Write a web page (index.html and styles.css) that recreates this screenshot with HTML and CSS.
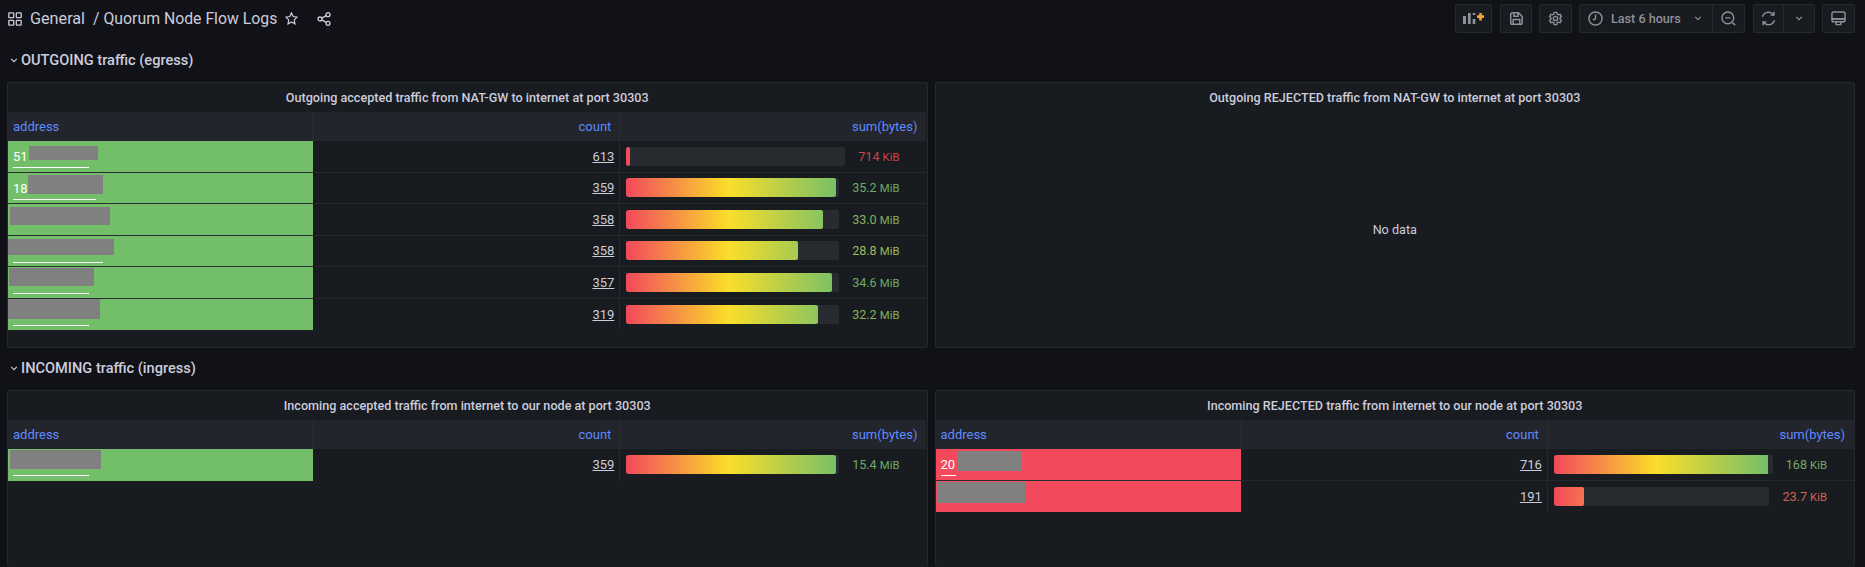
FILE: index.html
```html
<!DOCTYPE html>
<html lang="en">
<head>
  <meta charset="UTF-8">
  <meta name="viewport" content="width=device-width, initial-scale=1.0">
  <title>Quorum Node Flow Logs</title>
  <link rel="stylesheet" href="styles.css">
</head>
<body>
  <header class="navbar">
    <div class="crumbs">
      <svg class="icon grid-icon" viewBox="0 0 14 14"><rect x="0.800" y="0.800" width="4.900" height="4.900" rx="0.600"/><rect x="8.300" y="0.800" width="4.900" height="4.900" rx="0.600"/><rect x="0.800" y="8.300" width="4.900" height="4.900" rx="0.600"/><rect x="8.300" y="8.300" width="4.900" height="4.900" rx="0.600"/></svg>
      <span class="crumb-folder">General</span>
      <span class="crumb-name">/ Quorum Node Flow Logs</span>
      <svg class="icon star-icon" viewBox="0 0 14 14"><path d="M7 1l1.800 3.900 4.200.6-3 3 .7 4.300L7 10.700l-3.700 2.100.7-4.300-3-3 4.200-.6z"/></svg>
      <svg class="icon share-icon" viewBox="0 0 14 14"><circle cx="11" cy="2.700" r="2"/><circle cx="3" cy="7" r="2"/><circle cx="11" cy="11.300" r="2"/><path d="M4.800 6.100l4.400-2.500M4.800 7.900l4.400 2.500"/></svg>
    </div>
    <div class="toolbar">
      <button class="btn btn-add">
        <svg viewBox="0 0 21 11" class="add-icon"><path class="bars" d="M0 3h3v8H0zM5 0h2.700v11H5zM9.700 6h2.600v5H9.700zM9.700 0h2.600v2H9.700z"/><path class="plus" d="M16.200 0h2.600v2.300H21v2.600h-2.200V7.500h-2.600V4.900H14V2.300h2.200z"/></svg>
      </button>
      <button class="btn btn-save">
        <svg class="icon" viewBox="0 0 13 13"><path d="M2.200 .8h6.300l3.700 3.700v6.300a1.500 1.500 0 0 1-1.500 1.500H2.200a1.500 1.500 0 0 1-1.500-1.500V2.300A1.500 1.500 0 0 1 2.200 .8zM3.800 .8v3.400h4.200V.8M3.200 12.300V7.500h6.600v4.800"/></svg>
      </button>
      <button class="btn btn-cog">
        <svg class="icon" viewBox="0 0 16 16"><circle cx="8" cy="8" r="2.300"/><path d="M6.600 1.500h2.800l.4 1.900 1.300.7 1.800-.6 1.400 2.400-1.400 1.300v1.600l1.400 1.300-1.400 2.400-1.800-.6-1.300.7-.4 1.900H6.600l-.4-1.900-1.300-.7-1.800.6-1.400-2.400 1.400-1.300V7.200L1.700 5.900l1.400-2.400 1.800.6 1.300-.7z"/></svg>
      </button>
      <div class="btn-group group-time">
        <button class="btn btn-time">
          <svg class="icon" viewBox="0 0 16 16"><circle cx="8" cy="8" r="7"/><path d="M8 3.800v4.500l-2.800 1.300"/></svg>
          <span class="time-label">Last 6 hours</span>
          <svg class="chev" viewBox="0 0 10 6"><path d="M1.500 1L5 4.500 8.500 1"/></svg>
        </button>
        <button class="btn btn-zoom">
          <svg class="icon" viewBox="0 0 16 16"><circle cx="7.300" cy="7.300" r="6.300"/><path d="M4.500 7.300h5.600M12 12l3.200 3.200"/></svg>
        </button>
      </div>
      <div class="btn-group">
        <button class="btn btn-refresh">
          <svg class="icon" viewBox="0 0 16 16"><path d="M1.600 6.200A6.600 6.600 0 0 1 13.200 4M14.400 9.800A6.600 6.600 0 0 1 2.800 12M13.800 .8v3.600h-3.600M2.200 15.200v-3.600h3.600"/></svg>
        </button>
        <button class="btn btn-more">
          <svg class="chev" viewBox="0 0 10 6"><path d="M1.500 1L5 4.500 8.500 1"/></svg>
        </button>
      </div>
      <button class="btn btn-tv">
        <svg class="icon" viewBox="0 0 16 16"><rect x="1" y="1" width="14" height="10.500" rx="2"/><path class="tv-band" d="M1 8.500h14"/><path d="M5.500 11.500v3h5v-3"/></svg>
      </button>
    </div>
  </header>

  <h2 class="row-title">
    <svg class="chev" viewBox="0 0 10 6"><path d="M1.500 1L5 4.500 8.500 1"/></svg>
    OUTGOING traffic (egress)
  </h2>
  <section class="panels">
    <article class="panel">
      <h3 class="panel-title">Outgoing accepted traffic from NAT-GW to internet at port 30303</h3>
      <div class="table">
        <div class="cell-head">address</div>
        <div class="cell-head head-num">count</div>
        <div class="cell-head head-num">sum(bytes)</div>

        <div class="addr ok"><a class="addr-link link-76">51</a><span class="mask mask-a"></span></div>
        <div class="num"><a>613</a></div>
        <div class="gauge"><div class="track"><div class="fill" style="width:1.800%"></div></div><span class="val v-red">714 <small>KiB</small></span></div>

        <div class="addr ok"><a class="addr-link link-83">18</a><span class="mask mask-b"></span></div>
        <div class="num"><a>359</a></div>
        <div class="gauge"><div class="track"><div class="fill" style="width:98.600%"></div></div><span class="val v-green">35.2 <small>MiB</small></span></div>

        <div class="addr ok"><span class="mask mask-c"></span></div>
        <div class="num"><a>358</a></div>
        <div class="gauge"><div class="track"><div class="fill" style="width:92.500%"></div></div><span class="val v-green2">33.0 <small>MiB</small></span></div>

        <div class="addr ok"><a class="addr-link link-90"></a><span class="mask mask-d"></span></div>
        <div class="num"><a>358</a></div>
        <div class="gauge"><div class="track"><div class="fill" style="width:80.800%"></div></div><span class="val v-lime">28.8 <small>MiB</small></span></div>

        <div class="addr ok"><a class="addr-link link-76"></a><span class="mask mask-e"></span></div>
        <div class="num"><a>357</a></div>
        <div class="gauge"><div class="track"><div class="fill" style="width:96.700%"></div></div><span class="val v-green">34.6 <small>MiB</small></span></div>

        <div class="addr ok"><a class="addr-link link-76"></a><span class="mask mask-f"></span></div>
        <div class="num"><a>319</a></div>
        <div class="gauge"><div class="track"><div class="fill" style="width:90.200%"></div></div><span class="val v-green2">32.2 <small>MiB</small></span></div>
      </div>
    </article>
    <article class="panel">
      <h3 class="panel-title">Outgoing REJECTED traffic from NAT-GW to internet at port 30303</h3>
      <div class="no-data">No data</div>
    </article>
  </section>

  <h2 class="row-title">
    <svg class="chev" viewBox="0 0 10 6"><path d="M1.500 1L5 4.500 8.500 1"/></svg>
    INCOMING traffic (ingress)
  </h2>
  <section class="panels panels-cut">
    <article class="panel">
      <h3 class="panel-title">Incoming accepted traffic from internet to our node at port 30303</h3>
      <div class="table">
        <div class="cell-head">address</div>
        <div class="cell-head head-num">count</div>
        <div class="cell-head head-num">sum(bytes)</div>

        <div class="addr ok"><a class="addr-link link-76"></a><span class="mask mask-g"></span></div>
        <div class="num"><a>359</a></div>
        <div class="gauge"><div class="track"><div class="fill" style="width:98.600%"></div></div><span class="val v-green">15.4 <small>MiB</small></span></div>
      </div>
    </article>
    <article class="panel">
      <h3 class="panel-title">Incoming REJECTED traffic from internet to our node at port 30303</h3>
      <div class="table">
        <div class="cell-head">address</div>
        <div class="cell-head head-num">count</div>
        <div class="cell-head head-num">sum(bytes)</div>

        <div class="addr bad"><a class="addr-link link-15">20</a><span class="mask mask-h"></span></div>
        <div class="num"><a>716</a></div>
        <div class="gauge"><div class="track"><div class="fill" style="width:98.600%"></div></div><span class="val v-green">168 <small>KiB</small></span></div>

        <div class="addr bad"><span class="mask mask-i"></span></div>
        <div class="num"><a>191</a></div>
        <div class="gauge"><div class="track"><div class="fill" style="width:13.800%"></div></div><span class="val v-orange">23.7 <small>KiB</small></span></div>
      </div>
    </article>
  </section>
</body>
</html>
```

FILE: styles.css
```css
html, body {
  height: 100%;
  overflow: hidden;
}
body {
  margin: 0;
  padding: 0 10px 0 7px;
  background-color: #111217;
  color: #ccccdc;
  font-family: Roboto, "Open Sans", sans-serif;
  font-size: 12.6px;
}

/* top bar */
.navbar {
  display: flex;
  justify-content: space-between;
  align-items: flex-start;
  height: 40px;
}
.crumbs {
  display: flex;
  align-items: center;
  height: 37px;
  font-size: 15.800px;
}
.crumb-folder {
  margin-left: 8px;
  font-size: 16.200px;
}
.crumb-name {
  margin-left: 8px;
}
.icon {
  width: 15px;
  height: 15px;
  fill: none;
  stroke: currentColor;
  stroke-width: 1.300;
  flex: none;
}
.grid-icon {
  width: 14px;
  height: 14px;
  margin-left: 1px;
}
.star-icon {
  width: 13px;
  height: 13px;
  margin-left: 8px;
}
.share-icon {
  width: 14px;
  height: 14px;
  margin-left: 19px;
}
.toolbar {
  display: flex;
  gap: 7px;
  margin-top: 4px;
  color: #8f919a;
}
.toolbar .icon {
  stroke-width: 1.500;
}
.btn-group {
  display: flex;
}
.group-time {
  margin-right: 1px;
}
.btn {
  display: flex;
  align-items: center;
  justify-content: center;
  height: 29px;
  padding: 0;
  background-color: #181b1f;
  border: 1px solid #25282d;
  border-radius: 2px;
  color: inherit;
  font: inherit;
}
.btn-add { width: 37px; margin-right: 1px; }
.btn-save { width: 32px; }
.btn-save .icon { width: 13px; height: 13px; }
.btn-cog { width: 33px; }
.btn-tv { width: 33px; }
.btn-time {
  width: 134px;
  padding-left: 8px;
  justify-content: flex-start;
  border-radius: 2px 0 0 2px;
}
.time-label {
  margin-left: 8px;
  font-weight: 500;
  color: #8e909a;
}
.btn-time .chev {
  margin-left: 13px;
}
.btn-zoom { width: 33px; margin-left: -1px; border-radius: 0 2px 2px 0; }
.btn-refresh { width: 31px; border-radius: 2px 0 0 2px; }
.btn-more { width: 32px; margin-left: -1px; border-radius: 0 2px 2px 0; }
.add-icon {
  width: 21px;
  height: 11px;
}
.add-icon .bars { fill: #8f919a; }
.add-icon .plus { fill: #f5a431; }
.tv-band { stroke-width: 2; }
.chev {
  width: 8px;
  height: 5px;
  fill: none;
  stroke: currentColor;
  stroke-width: 1.400;
  flex: none;
}

/* row headings */
.row-title {
  display: flex;
  align-items: center;
  gap: 3px;
  height: 40px;
  margin: 0 0 2px;
  padding-left: 3px;
  font-size: 14.600px;
  font-weight: 500;
  color: #ccccdc;
}

/* panels */
.panels {
  display: grid;
  grid-template-columns: 1fr 1fr;
  gap: 7px;
  height: 266px;
}
.panels-cut {
  height: 177px;
}
.panels-cut .panel {
  border-bottom: none;
}
.panel {
  display: flex;
  flex-direction: column;
  background-color: #181b1f;
  border: 1px solid #25282d;
  border-radius: 2px;
}
.panel-title {
  height: 29px;
  margin: 0;
  line-height: 29px;
  text-align: center;
  font-size: 12.6px;
  font-weight: 500;
}
.no-data {
  flex: 1;
  display: flex;
  align-items: center;
  justify-content: center;
}

/* table */
.table {
  display: grid;
  grid-template-columns: repeat(3, 1fr);
  grid-auto-rows: 31.500px;
  grid-template-rows: 29px;
}
.cell-head {
  display: flex;
  align-items: center;
  padding: 0 8px 0 5px;
  background-color: #22252b;
  border-right: 1px solid #2c2f35;
  color: #5f8aff;
  font-size: 13px;
}
.head-num {
  justify-content: flex-end;
}
.cell-head:nth-child(3) {
  border-right: none;
  padding-right: 9px;
}
.addr {
  position: relative;
  margin-right: 1px;
  border-bottom: 1px solid #2a2d33;
  padding: 6px 0 0 5px;
  color: #fff;
  line-height: 19px;
  font-size: 13px;
}
.ok { background-color: #73bf69; }
.bad { background-color: #f2495c; }
.addr-link {
  display: inline-block;
  height: 20px;
  border-bottom: 1px solid #fff;
}
.link-76 { width: 76px; }
.link-83 { width: 83px; }
.link-90 { width: 90px; }
.link-15 { width: 15px; }
.mask {
  position: absolute;
  background-color: #808080;
}
.mask-a { left: 21px; top: 5px; width: 69px; height: 14px; }
.mask-b { left: 20px; top: 2px; width: 75px; height: 19px; }
.mask-c { left: 2px; top: 3px; width: 100px; height: 18px; }
.mask-d { left: 0; top: 3px; width: 106px; height: 16px; }
.mask-e { left: 1px; top: 1px; width: 85px; height: 18px; }
.mask-f { left: 0; top: 0; width: 92px; height: 20px; }
.mask-g { left: 2px; top: 1px; width: 91px; height: 19px; }
.mask-h { left: 21px; top: 2px; width: 65px; height: 20px; }
.mask-i { left: 1px; top: 1px; width: 88px; height: 21px; }
.num {
  display: flex;
  align-items: center;
  justify-content: flex-end;
  padding-right: 5px;
  border-bottom: 1px solid #24272c;
  border-right: 1px solid #24272c;
  font-size: 13px;
}
.num a {
  text-decoration: underline;
}
.gauge {
  display: flex;
  align-items: center;
  padding: 0 27px 0 6px;
  border-bottom: 1px solid #24272c;
}
/* last row of a table has no line under it */
.table > :nth-last-child(-n+3) {
  border-bottom: none;
}
.track {
  flex: 1;
  height: 19px;
  background-color: #282b30;
  border-radius: 2px;
  overflow: hidden;
}
.fill {
  height: 100%;
  border-radius: 2px;
  background-image: linear-gradient(90deg, #f2495c, #fade2a 48%, #73bf69);
  background-size: 214px 100%;
  background-repeat: no-repeat;
}
.val {
  margin-left: 13px;
  font-size: 12.6px;
}
.val small {
  font-size: 11.300px;
}
.v-red { color: #c9434f; }
.v-green { color: #6fab66; }
.v-green2 { color: #85b05c; }
.v-lime { color: #9dba55; }
.v-orange { color: #d2644f; }
```
